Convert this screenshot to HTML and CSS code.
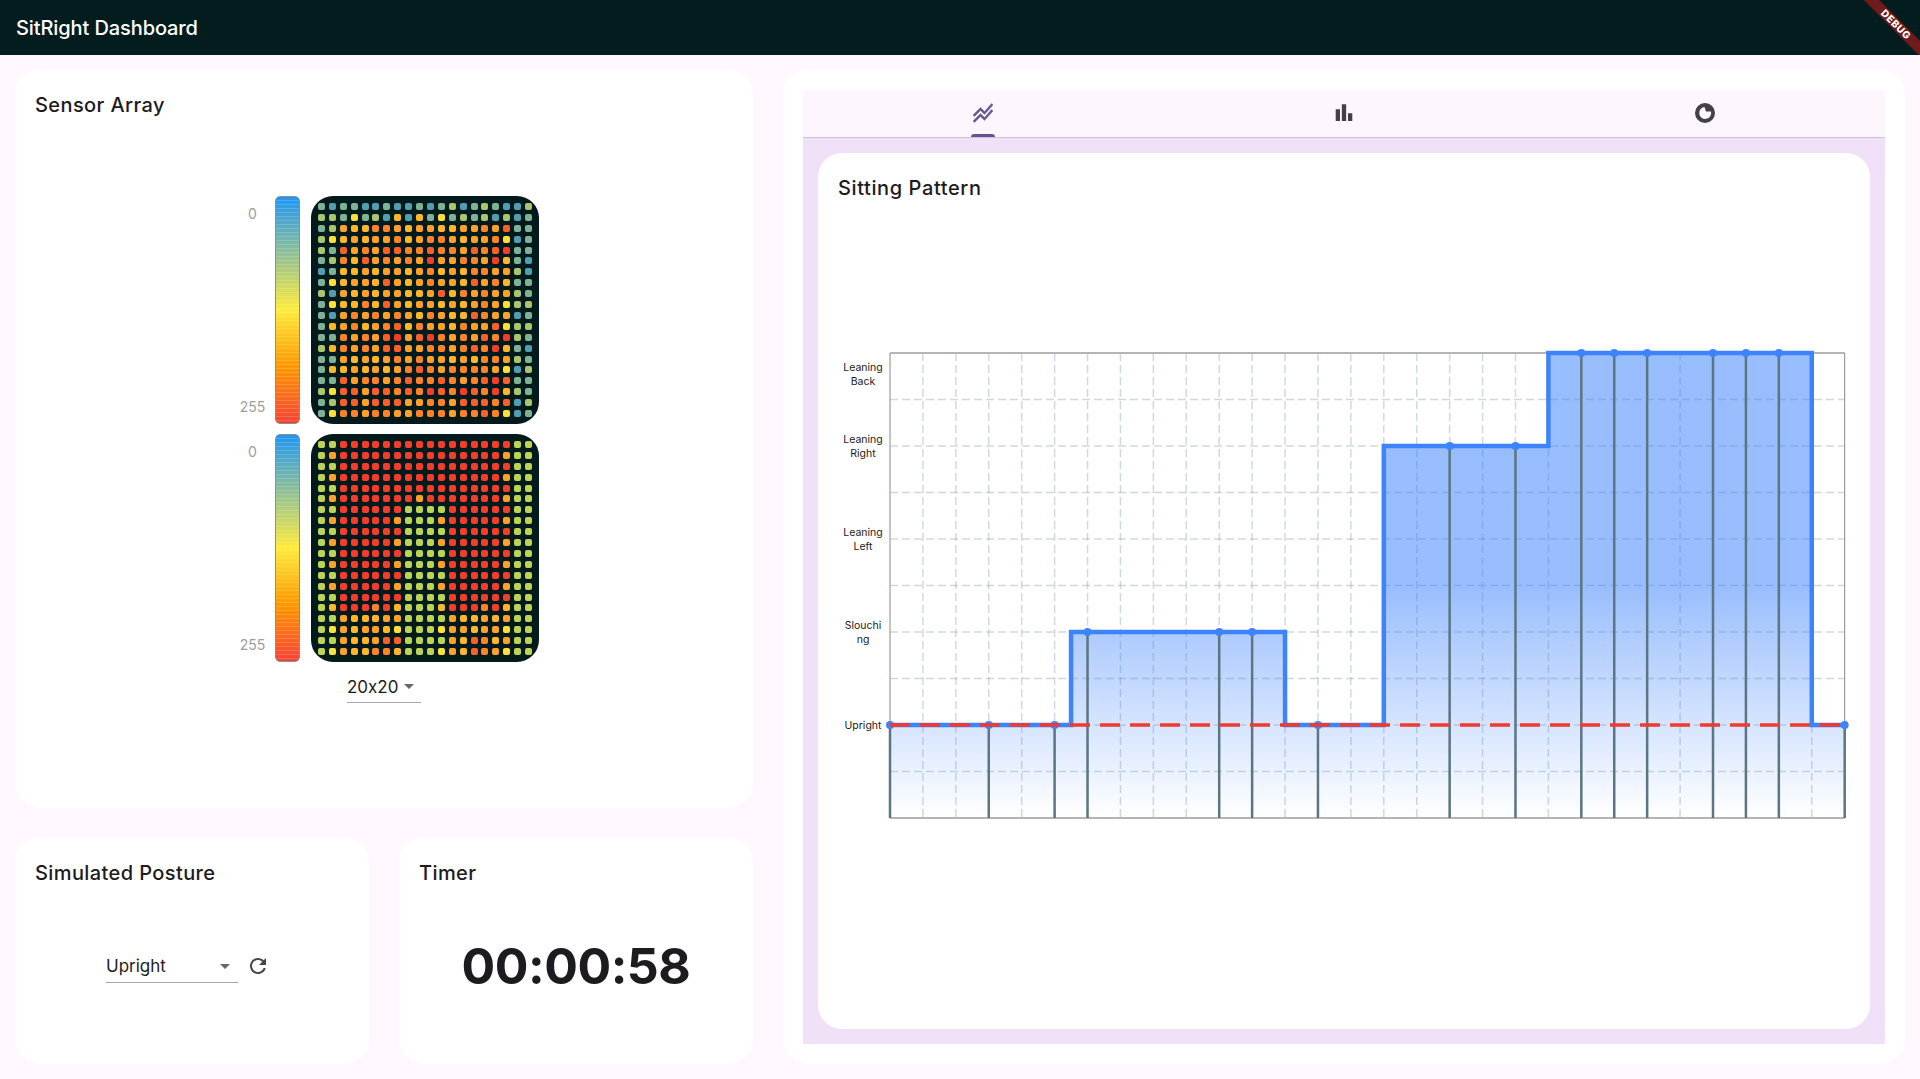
FILE: index.html
```html
<!DOCTYPE html>
<html lang="en">
<head>
<meta charset="UTF-8">
<title>SitRight Dashboard</title>
<link rel="stylesheet" href="styles.css">
</head>
<body>

<header class="app-bar">
<h1>SitRight Dashboard</h1>
<div class="debug-banner">DEBUG</div>
</header>

<main class="layout">

<div class="left-col">

<section class="card sensor-card">
<h2 class="card-title">Sensor Array</h2>
<div class="sensor-body">
<div class="sensor-row">
<div class="scale-labels"><span>0</span><span>255</span></div>
<div class="color-bar"></div>
<div class="heatmap" id="mapTop"></div>
</div>
<div class="sensor-row">
<div class="scale-labels"><span>0</span><span>255</span></div>
<div class="color-bar"></div>
<div class="heatmap" id="mapBottom"></div>
</div>
<div class="dropdown size-select">
<span>20x20</span>
<i class="caret"></i>
</div>
</div>
</section>

<div class="bottom-row">
<section class="card small-card">
<h2 class="card-title">Simulated Posture</h2>
<div class="small-body posture-body">
<div class="dropdown posture-select">
<span>Upright</span>
<i class="caret"></i>
</div>
<svg class="refresh" viewBox="0 0 24 24"><path d="M17.65 6.35C16.2 4.9 14.21 4 12 4c-4.42 0-7.99 3.58-7.99 8s3.57 8 7.99 8c3.73 0 6.84-2.55 7.73-6h-2.08c-.82 2.33-3.04 4-5.65 4-3.31 0-6-2.69-6-6s2.69-6 6-6c1.66 0 3.14.69 4.22 1.78L13 11h7V4l-2.35 2.35z"/></svg>
</div>
</section>
<section class="card small-card">
<h2 class="card-title">Timer</h2>
<div class="small-body">
<div class="timer">00:00:58</div>
</div>
</section>
</div>

</div>

<section class="card chart-card">
<nav class="tabs">
<div class="tab active">
<svg viewBox="0 0 24 24"><path d="M2 19.99l7.5-7.51 4 4 7.09-7.97L22 9.92l-8.5 9.56-4-4-6 6.01-1.5-1.5zm1.5-4.5l6-6.01 4 4L22 3.92l-1.41-1.41-7.09 7.97-4-4L2 13.99l1.5 1.5z"/></svg>
</div>
<div class="tab">
<svg viewBox="0 0 24 24"><path d="M3.7 8.3h4.3V20H3.7zM9.85 3.3h4.3V20h-4.3zM16 12.3h4.3V20H16z"/></svg>
</div>
<div class="tab">
<svg viewBox="0 0 24 24"><path fill-rule="evenodd" d="M12 2a10 10 0 1 0 0 20 10 10 0 0 0 0-20zM11.5 6L13 10.5h5A6 6 0 1 1 11.5 6z"/></svg>
</div>
</nav>
<div class="tab-panel">
<div class="card pattern-card">
<h2 class="card-title">Sitting Pattern</h2>
<svg class="chart" id="patternChart" viewBox="0 0 1052 540"></svg>
</div>
</div>
</section>

</main>

<script src="app.js"></script>
</body>
</html>
```

FILE: styles.css
```css
*{
box-sizing:border-box;
}

body{
margin:0;
height:1079px;
overflow:hidden;
background:#fef7ff;
color:#1d1b20;
font-family:Inter, "Noto Sans", sans-serif;
font-feature-settings:"calt" 0;
}

.app-bar{
height:55px;
background:#031d1f;
display:flex;
align-items:center;
padding:0 16px;
position:relative;
overflow:hidden;
}

.app-bar h1{
margin:0;
color:#fff;
font-size:20px;
font-weight:500;
letter-spacing:-0.1px;
}

.debug-banner{
position:absolute;
left:1836px;
top:18.5px;
width:120px;
height:11px;
line-height:11px;
background:#6f1a1c;
color:#fff;
font-size:10px;
font-weight:800;
letter-spacing:0.5px;
text-align:center;
transform:rotate(45deg);
}

.layout{
display:grid;
grid-template-columns:738px 1122px;
column-gap:30px;
padding:15px;
height:1024px;
}

.left-col{
display:grid;
grid-template-rows:738px 226px;
row-gap:30px;
}

.card{
background:#fff;
border-radius:24px;
}

.card-title{
margin:0;
font-size:20px;
font-weight:500;
line-height:24px;
letter-spacing:0.4px;
}

.sensor-card{
padding:23px 20px;
}

.sensor-body{
display:flex;
flex-direction:column;
align-items:center;
gap:10px;
margin-top:79px;
}

.sensor-row{
display:flex;
height:228px;
}

.scale-labels{
width:47px;
padding:6px 0 5px;
display:flex;
flex-direction:column;
justify-content:space-between;
align-items:center;
font-size:14px;
line-height:24px;
color:#9e9e9e;
margin-right:-1px;
}

.color-bar{
width:25px;
margin-right:11px;
border:1px solid #8d8d8d;
border-radius:5px;
background:
repeating-linear-gradient(to bottom,rgba(255,255,255,0) 0,rgba(255,255,255,0) 3px,rgba(255,255,255,0.16) 3px,rgba(255,255,255,0.16) 4px),
linear-gradient(to bottom,#2196f3,#ffeb3b 50%,#ff9800 75%,#f44336);
}

.heatmap{
width:228px;
height:228px;
background:#031a1c;
border-radius:22px;
display:grid;
grid-template-columns:repeat(20,7px);
grid-auto-rows:7px;
gap:3.9px;
justify-content:center;
align-content:center;
}

.dot{
border-radius:2px;
}

.dropdown{
position:relative;
display:flex;
align-items:center;
border-bottom:1px solid #aaa8ad;
font-size:17px;
}

.caret{
position:absolute;
top:13px;
border-left:5px solid transparent;
border-right:5px solid transparent;
border-top:5px solid #666;
}

.size-select{
width:74px;
height:32px;
margin-top:-1px;
}

.size-select .caret{
right:7px;
}

.bottom-row{
display:grid;
grid-template-columns:354px 354px;
column-gap:30px;
}

.small-card{
padding:23px 20px;
display:flex;
flex-direction:column;
}

.small-body{
flex:1;
display:flex;
align-items:center;
justify-content:center;
padding-top:5px;
}

.posture-body{
padding-right:8px;
}

.posture-select{
width:132px;
height:32px;
margin-top:2px;
}

.posture-select .caret{
right:8px;
}

.refresh{
width:24px;
height:24px;
margin-left:8px;
fill:#49454f;
}

.timer{
font-size:50px;
font-weight:700;
letter-spacing:-0.5px;
color:#1d1b20;
}

.chart-card{
padding:20px;
display:flex;
flex-direction:column;
}

.tabs{
display:flex;
height:48px;
flex:none;
background:#fdf6fe;
border-bottom:1px solid #cac4d0;
}

.tab{
flex:1;
display:flex;
align-items:center;
justify-content:center;
position:relative;
padding-bottom:2px;
}

.tab svg{
width:24px;
height:24px;
fill:#44404a;
}

.tab.active svg{
fill:#65558f;
stroke:#65558f;
stroke-width:0.4;
}

.tab.active::after{
content:"";
position:absolute;
left:50%;
bottom:0;
width:24px;
height:3px;
margin-left:-12px;
background:#65558f;
border-radius:3px 3px 0 0;
}

.tab-panel{
flex:1;
background:#f0e1f8;
padding:15px;
}

.pattern-card{
height:100%;
padding:23px 20px;
display:flex;
flex-direction:column;
}

.pattern-card .card-title{
letter-spacing:0.6px;
}

.pattern-card .chart{
width:1052px;
height:540px;
margin:100px 0 0 -20px;
}

.axis-label{
font-size:10.5px;
fill:#1d1b20;
text-anchor:middle;
}

.grid-line{
stroke:#90a4ae;
stroke-opacity:0.42;
stroke-width:1.5;
stroke-dasharray:8 4;
}
```

FILE: app.js
```js
// heatmap colours, one letter per sensor
const palette={
b:"#4f9fb0",g:"#7db394",l:"#a9c56d",G:"#bcd354",y:"#ffe135",a:"#ffb627",
o:"#ffa126",d:"#ff8226",r:"#fa5f2a",R:"#f33c2a"
};

const topRows=[
"gbggbbgbbgbglbglgbbl",
"llgyglbabagyglglblbg",
"gloaaddoaooaaoodorgg",
"lyaoaoodaoddoaoodybg",
"lgrodorrddrddordrRgg",
"gldarododoRooddoRagb",
"bgaaoaooaodaoaddoolb",
"gyaooaroaodooarodagg",
"lboaoaooaaoradodoolg",
"gyaadaroaooaoaodoyll",
"gbodododoadoaardoobg",
"gaodaodradooadooryll",
"ggdodorRorRdodordRlg",
"ladodorrooddodrdRagb",
"ggoaoaododooaoaddolg",
"gaaoaoaodrdoddddoybl",
"ggroddodrddrdodrRrgg",
"lyrrorrdrdRrdRrdRalg",
"glrrorrrooddorrrdrbl",
"gyddoddoodddoddrdybg"
];

const full="GGRRRRRRRRRRRRRRRRGG";
const notch="GoRRRRRRRRRRRRRRRoGG";
const split="GGRRRRRRGGGGRRRRRRGG";
const splitB="GoRRRRRoGGGoRRRRRoGG";

const bottomRows=[
full,notch,full,notch,full,
"GoRRRRRRRoRRRRRRRoGG",
split,splitB,split,splitB,split,splitB,split,splitB,split,
"GaRRRdRaGGGaRRRdRaGG",
"GGoaaaooGGGGoaaoaoGG",
"GyoaooayGGGyooaooyGG",
"GGoaaorrGGGGoardaoGG",
"GyoaaddaGGGyoardoyGG"
];

function fillMap(id,rows){
const map=document.getElementById(id);
rows.join("").split("").forEach(c=>{
const dot=document.createElement("div");
dot.className="dot";
dot.style.background=palette[c];
map.appendChild(dot);
});
}

fillMap("mapTop",topRows);
fillMap("mapBottom",bottomRows);

// chart, drawn in the svg's own coordinates
const SVG_NS="http://www.w3.org/2000/svg";
const chart=document.getElementById("patternChart");
const BLUE="#3d83fc";
const left=72,top_=53,unitX=32.92,unitY=93,cols=29;
const right=left+cols*unitX;
const yOf=v=>top_+(4-v)*unitY;
const bottom=yOf(-1);
const xOf=i=>left+i*unitX;

function add(tag,attrs,parent){
const el=document.createElementNS(SVG_NS,tag);
for(const k in attrs) el.setAttribute(k,attrs[k]);
(parent||chart).appendChild(el);
return el;
}

const defs=add("defs",{});
const grad=add("linearGradient",{id:"areaFill",x1:0,y1:top_,x2:0,y2:bottom,gradientUnits:"userSpaceOnUse"},defs);
add("stop",{offset:"0","stop-color":BLUE,"stop-opacity":"0.53"},grad);
add("stop",{offset:"0.5","stop-color":BLUE,"stop-opacity":"0.53"},grad);
add("stop",{offset:"1","stop-color":BLUE,"stop-opacity":"0"},grad);

// grid
for(let i=1;i<cols;i++){
add("line",{x1:xOf(i),x2:xOf(i),y1:top_,y2:bottom,class:"grid-line"});
}
for(let v=-0.5;v<4;v+=0.5){
add("line",{x1:left,x2:right,y1:yOf(v),y2:yOf(v),class:"grid-line"});
}

// step line: [x index, level]
const steps=[[0,0],[5.5,0],[5.5,1],[12,1],[12,0],[15,0],[15,3],[20,3],[20,4],[28,4],[28,0],[29,0]];
const linePts=steps.map(p=>xOf(p[0])+","+yOf(p[1])).join(" ");
add("polygon",{points:xOf(0)+","+bottom+" "+linePts+" "+xOf(29)+","+bottom,fill:"url(#areaFill)"});

// border
add("line",{x1:left,x2:right,y1:top_,y2:top_,stroke:"#b5b5b5","stroke-width":2});
add("line",{x1:left,x2:right,y1:bottom,y2:bottom,stroke:"#b5b5b5","stroke-width":2});
add("line",{x1:left,x2:left,y1:top_,y2:bottom,stroke:"#888","stroke-width":1});
add("line",{x1:right,x2:right,y1:top_,y2:bottom,stroke:"#888","stroke-width":1});

// sample points
const samples=[[0,0],[3,0],[5,0],[6,1],[10,1],[11,1],[13,0],[17,3],[19,3],[21,4],[22,4],[23,4],[25,4],[26,4],[27,4],[29,0]];
samples.forEach(p=>{
add("line",{x1:xOf(p[0]),x2:xOf(p[0]),y1:yOf(p[1]),y2:bottom,stroke:"#5b7682","stroke-width":2.5});
});

add("polyline",{points:linePts,fill:"none",stroke:BLUE,"stroke-width":4.5});

samples.forEach(p=>{
add("circle",{cx:xOf(p[0]),cy:yOf(p[1]),r:4,fill:BLUE});
});

// target line
add("line",{x1:left,x2:right,y1:yOf(0),y2:yOf(0),stroke:"#f0392f","stroke-width":3.5,"stroke-dasharray":"20 10"});

// y axis labels
const labels=[[4,["Leaning","Back"],18],[3,["Leaning","Right"],-3],[2,["Leaning","Left"],-3],[1,["Slouchi","ng"],-3],[0,["Upright"],4]];
labels.forEach(l=>{
l[1].forEach((t,i)=>{
add("text",{x:left-27,y:yOf(l[0])+l[2]+i*13.8,class:"axis-label"}).textContent=t;
});
});
```
